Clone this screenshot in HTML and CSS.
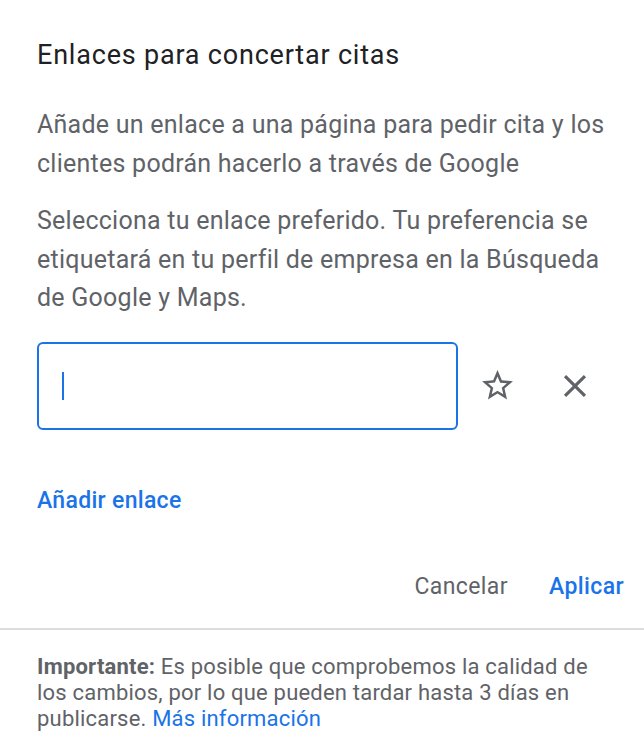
FILE: index.html
```html
<!DOCTYPE html>
<html lang="es">
<head>
  <meta charset="UTF-8" />
  <meta name="viewport" content="width=device-width, initial-scale=1.0" />
  <title>Enlaces para concertar citas</title>
  <link rel="stylesheet" href="styles.css">
</head>
<body>
  <div class="dialog">
    <h1 class="title">Enlaces para concertar citas</h1>
    <p class="text">Añade un enlace a una página para pedir cita y los clientes podrán hacerlo a través de Google</p>
    <p class="text">Selecciona tu enlace preferido. Tu preferencia se etiquetará en tu perfil de empresa en la Búsqueda de Google y Maps.</p>

    <div class="link-row">
      <div class="link-input"><span class="caret"></span></div>
      <button class="icon-button" aria-label="Preferido">
        <svg viewBox="0 0 24 24" width="37" height="37"><path fill="#5f6368" d="M22 9.24l-7.19-.62L12 2 9.19 8.63 2 9.24l5.46 4.73L5.82 21 12 17.27 18.18 21l-1.63-7.03L22 9.24zM12 15.4l-3.76 2.27 1-4.28-3.32-2.88 4.38-.38L12 6.1l1.71 4.04 4.38.38-3.32 2.88 1 4.28L12 15.4z"/></svg>
      </button>
      <button class="icon-button" aria-label="Quitar">
        <svg viewBox="0 0 24 24" width="38" height="38"><path fill="#5f6368" d="M19 6.41L17.59 5 12 10.59 6.41 5 5 6.41 10.59 12 5 17.59 6.41 19 12 13.41 17.59 19 19 17.59 13.41 12z"/></svg>
      </button>
    </div>

    <a class="add-link" href="#">Añadir enlace</a>

    <div class="actions">
      <button class="text-button">Cancelar</button>
      <button class="text-button primary">Aplicar</button>
    </div>
  </div>

  <div class="footer">
    <b>Importante:</b> Es posible que comprobemos la calidad de los cambios, por lo que pueden tardar hasta 3 días en publicarse. <a href="#">Más información</a>
  </div>
</body>
</html>
```

FILE: styles.css
```css
body {
  margin: 0;
  background-color: #fff;
  font-family: Roboto, "Noto Sans", sans-serif;
  color: #5f6368;
}
.dialog {
  padding: 39px 20px 0 37px;
}
.title {
  margin: 0;
  font-size: 27px;
  font-weight: 400;
  line-height: 32px;
  letter-spacing: 0.8px;
  color: #202124;
}
.text {
  margin: 0;
  padding-top: 19px;
  font-size: 25px;
  line-height: 38.5px;
  letter-spacing: 0.25px;
}
.title + .text {
  padding-top: 35px;
}
.link-row {
  display: flex;
  align-items: center;
  margin-top: 24px;
}
.link-input {
  box-sizing: border-box;
  width: 421px;
  height: 88px;
  border: 2px solid #1a73e8;
  border-radius: 6px;
  display: flex;
  align-items: center;
  padding-left: 23px;
}
.caret {
  width: 2px;
  height: 28px;
  background-color: #1a73e8;
}
.icon-button {
  background: none;
  border: none;
  padding: 0;
  margin-left: 11px;
  width: 56px;
  height: 56px;
  display: flex;
  align-items: center;
  justify-content: center;
  cursor: pointer;
}
.icon-button + .icon-button {
  margin-left: 22px;
}
.add-link {
  display: inline-block;
  margin-top: 57px;
  font-size: 23px;
  font-weight: 500;
  line-height: 28px;
  letter-spacing: 0.3px;
  color: #1a73e8;
  text-decoration: none;
}
.actions {
  display: flex;
  justify-content: flex-end;
  gap: 41px;
  margin-top: 58px;
  padding-bottom: 27px;
}
.text-button {
  background: none;
  border: none;
  padding: 0;
  font-family: inherit;
  font-size: 23px;
  font-weight: 400;
  line-height: 28px;
  letter-spacing: 0.4px;
  color: #5f6368;
  cursor: pointer;
}
.text-button.primary {
  font-weight: 500;
  color: #1a73e8;
}
.footer {
  border-top: 2px solid #dadce0;
  padding: 24px 45px 20px 37px;
  font-size: 22px;
  line-height: 26px;
  letter-spacing: 0.2px;
}
.footer b {
  font-weight: 700;
}
.footer a {
  color: #1a73e8;
  text-decoration: none;
}
```
